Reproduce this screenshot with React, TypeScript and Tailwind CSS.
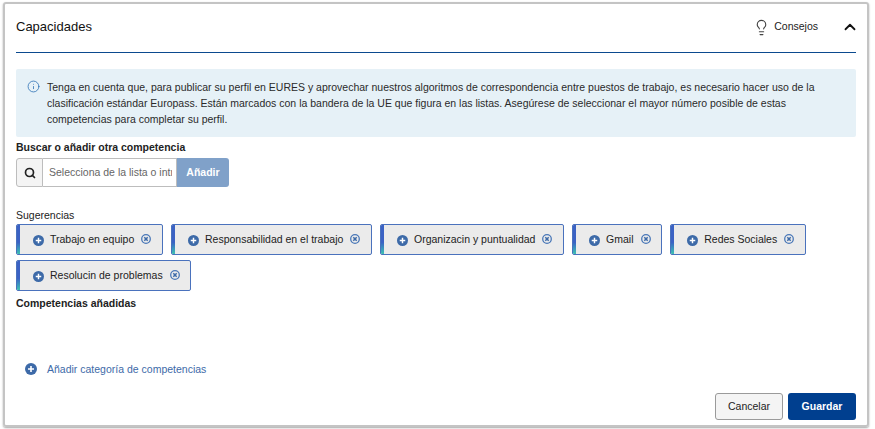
import { ChevronUp, Info, Lightbulb, Search } from "lucide-react";

const suggestions = [
  "Trabajo en equipo",
  "Responsabilidad en el trabajo",
  "Organizacin y puntualidad",
  "Gmail",
  "Redes Sociales",
  "Resolucin de problemas",
];

function PlusCircle({ size = 11 }: { size?: number }) {
  return (
    <svg width={size} height={size} viewBox="0 0 12 12" className="shrink-0">
      <circle cx="6" cy="6" r="6" fill="#3d6aa8" />
      <path d="M6 3v6M3 6h6" stroke="#fff" strokeWidth="1.6" />
    </svg>
  );
}

function RemoveIcon() {
  return (
    <svg width="10" height="10" viewBox="0 0 10 10" className="shrink-0">
      <circle cx="5" cy="5" r="4.3" fill="none" stroke="#4a78b8" strokeWidth="1.3" />
      <path d="M3.3 3.3l3.4 3.4M6.7 3.3l-3.4 3.4" stroke="#3d6aa8" strokeWidth="1.5" />
    </svg>
  );
}

function Chip({ label }: { label: string }) {
  return (
    <div className="relative flex h-[31px] items-center overflow-hidden rounded-[2px] border border-[#4a72bd] bg-[#ebebeb] pl-[16px] pr-[10.7px]">
      <div className="absolute bottom-0 left-0 top-0 w-[3px] bg-gradient-to-b from-[#3b62c4] from-60% to-[#3fc1b0]" />
      <span className="mt-[2px]">
        <PlusCircle />
      </span>
      <span className="ml-[6px] text-[10.5px] leading-none text-[#222]">{label}</span>
      <span className="ml-[7px] mb-[1px]">
        <RemoveIcon />
      </span>
    </div>
  );
}

export default function App() {
  return (
    <div className="h-[429px] w-[875px] bg-white pl-[3px] pt-[2px] font-['Liberation_Sans',Arial,sans-serif]">
      <div className="flex h-[425px] w-[866px] flex-col rounded-[3px] border-2 border-[#c4c4c4] px-[11px] shadow-[0_1px_2px_rgba(0,0,0,0.35)]">
        {/* header */}
        <div className="flex h-[49px] shrink-0 items-center justify-between border-b border-[#0b4a8f] pb-[2px]">
          <h2 className="text-[13px] text-[#111]">Capacidades</h2>
          <div className="flex items-center">
            <Lightbulb size={17} strokeWidth={1.6} className="text-[#444]" />
            <span className="ml-[4px] text-[10.5px] text-[#222]">Consejos</span>
            <ChevronUp size={18} strokeWidth={2.4} className="ml-[23px] mr-[-3px] text-[#111]" />
          </div>
        </div>

        {/* info */}
        <div className="mt-[16px] flex h-[68px] shrink-0 rounded-[2px] bg-[#e6f1f7] pl-[11px] pr-[8px] pt-[10px]">
          <Info size={13} strokeWidth={1.5} className="mt-[1px] shrink-0 text-[#2f73b5]" />
          <p className="ml-[7px] text-[10.5px] leading-[16px] text-[#2a2a2a]">
            Tenga en cuenta que, para publicar su perfil en EURES y aprovechar nuestros algoritmos de correspondencia entre puestos de trabajo, es necesario hacer uso de la clasificación estándar Europass. Están marcados con la bandera de la UE que figura en las listas. Asegúrese de seleccionar el mayor número posible de estas competencias para completar su perfil.
          </p>
        </div>

        {/* search */}
        <label className="mt-[3px] text-[10.5px] font-bold leading-[14px] text-[#222]">Buscar o añadir otra competencia</label>
        <div className="mt-[4px] flex h-[29px] w-[213px]">
          <div className="flex w-[27px] items-center justify-center rounded-l-[3px] border border-[#bdbdbd] bg-[#f4f4f4]">
            <Search size={12} strokeWidth={3.4} className="text-[#222]" />
          </div>
          <input
            readOnly
            placeholder="Selecciona de la lista o introduce una competencia"
            className="w-[134px] border-y border-r border-[#bdbdbd] bg-white pl-[6px] pr-[4px] text-[10.5px] text-[#666] outline-none placeholder:text-[#666]"
          />
          <div className="flex w-[52px] items-center justify-center rounded-r-[3px] bg-[#80a1c9] text-[10.5px] font-bold text-white">Añadir</div>
        </div>

        {/* suggestions */}
        <div className="mt-[21px] text-[10.5px] leading-[14px] text-[#222]">Sugerencias</div>
        <div className="mt-[2px] flex flex-wrap gap-x-[8px] gap-y-[5px]">
          {suggestions.map((s) => (
            <Chip key={s} label={s} />
          ))}
        </div>
        <div className="mt-[5px] text-[10.5px] font-bold leading-[14px] text-[#222]">Competencias añadidas</div>

        {/* add category */}
        <div className="ml-[9px] mt-[52px] flex items-center">
          <PlusCircle size={12} />
          <span className="ml-[10px] text-[10.5px] leading-[14px] text-[#3d6aa8]">Añadir categoría de competencias</span>
        </div>

        {/* footer */}
        <div className="mt-auto mb-[5px] flex justify-end gap-[5px]">
          <button className="h-[27px] w-[68px] rounded-[3px] border border-[#9a9a9a] bg-[#f4f4f4] text-[10.5px] text-[#222]">Cancelar</button>
          <button className="h-[27px] w-[68px] rounded-[3px] bg-[#003f8f] text-[10.5px] font-bold text-white">Guardar</button>
        </div>
      </div>
    </div>
  );
}
